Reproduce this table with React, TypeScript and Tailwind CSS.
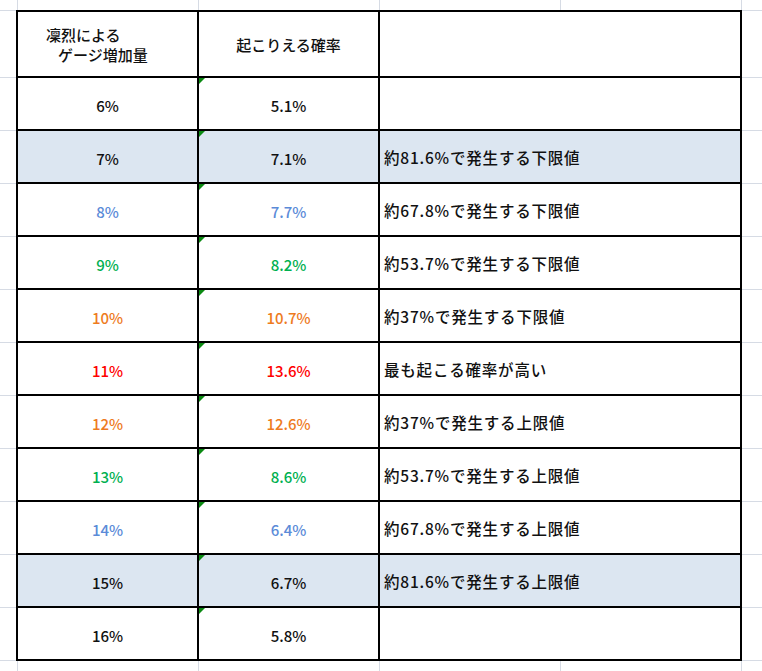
import React from "react";

type Row = { a: string; b: string; c: string; color: string; hl?: boolean };

const rows: Row[] = [
  { a: "6%", b: "5.1%", c: "", color: "text-[#111111]" },
  { a: "7%", b: "7.1%", c: "約81.6%で発生する下限値", color: "text-[#111111]", hl: true },
  { a: "8%", b: "7.7%", c: "約67.8%で発生する下限値", color: "text-[#5b8bd8]" },
  { a: "9%", b: "8.2%", c: "約53.7%で発生する下限値", color: "text-[#00b050]" },
  { a: "10%", b: "10.7%", c: "約37%で発生する下限値", color: "text-[#ee7b1e]" },
  { a: "11%", b: "13.6%", c: "最も起こる確率が高い", color: "text-[#ff0000]" },
  { a: "12%", b: "12.6%", c: "約37%で発生する上限値", color: "text-[#ee7b1e]" },
  { a: "13%", b: "8.6%", c: "約53.7%で発生する上限値", color: "text-[#00b050]" },
  { a: "14%", b: "6.4%", c: "約67.8%で発生する上限値", color: "text-[#5b8bd8]" },
  { a: "15%", b: "6.7%", c: "約81.6%で発生する上限値", color: "text-[#111111]", hl: true },
  { a: "16%", b: "5.8%", c: "", color: "text-[#111111]" },
];

function Strip() {
  return (
    <div className="col-span-5 flex">
      <div className="w-[18px] border-r border-[#d6dbe4]" />
      <div className="w-[181px] border-r border-[#d6dbe4]" />
      <div className="w-[181px] border-r border-[#d6dbe4]" />
      <div className="w-[181px] border-r border-[#d6dbe4]" />
      <div className="w-[181px] border-r border-[#d6dbe4]" />
    </div>
  );
}

function Tri() {
  return (
    <svg className="absolute left-0 top-0" width="6" height="6" viewBox="0 0 6 6">
      <polygon points="0,0 6,0 0,6" fill="#0b8a12" />
    </svg>
  );
}

export default function App() {
  return (
    <div className="w-[762px] h-[671px] bg-white overflow-hidden font-['Noto_Sans_CJK_JP',sans-serif] font-medium text-[15px] text-[#111111] grid grid-cols-[16px_183px_181px_362px_1fr] grid-rows-[10px_68px_repeat(11,53px)_1fr]">
      <Strip />
      {/* header row */}
      <div className="border-t border-b border-[#d6dbe4]" />
      <div className="border-2 border-black flex flex-col justify-center leading-[20px] pt-[1px]">
        <span className="pl-[28px]">凜烈による</span>
        <span className="pl-[40px]">ゲージ増加量</span>
      </div>
      <div className="border-t-2 border-r-2 border-b-2 border-black flex items-center justify-center pt-[3px]">
        起こりえる確率
      </div>
      <div className="border-t-2 border-r-2 border-b-2 border-black" />
      <div className="border-t border-b border-[#d6dbe4]" />
      {rows.map((r, i) => (
        <React.Fragment key={i}>
          <div className="border-b border-[#d6dbe4]" />
          <div
            className={`border-l-2 border-r-2 border-b-2 border-black flex items-center justify-center pt-[5px] ${r.color} ${r.hl ? "bg-[#dce6f1]" : "bg-white"}`}
          >
            {r.a}
          </div>
          <div
            className={`relative border-r-2 border-b-2 border-black flex items-center justify-center pt-[5px] ${r.color} ${r.hl ? "bg-[#dce6f1]" : "bg-white"}`}
          >
            <Tri />
            {r.b}
          </div>
          <div
            className={`border-r-2 border-b-2 border-black flex items-center pl-[4px] pt-[3px] text-[15.5px] tracking-[0.8px] text-[#111111] ${r.hl ? "bg-[#dce6f1]" : "bg-white"}`}
          >
            {r.c}
          </div>
          <div className="border-b border-[#d6dbe4]" />
        </React.Fragment>
      ))}
      <Strip />
    </div>
  );
}
